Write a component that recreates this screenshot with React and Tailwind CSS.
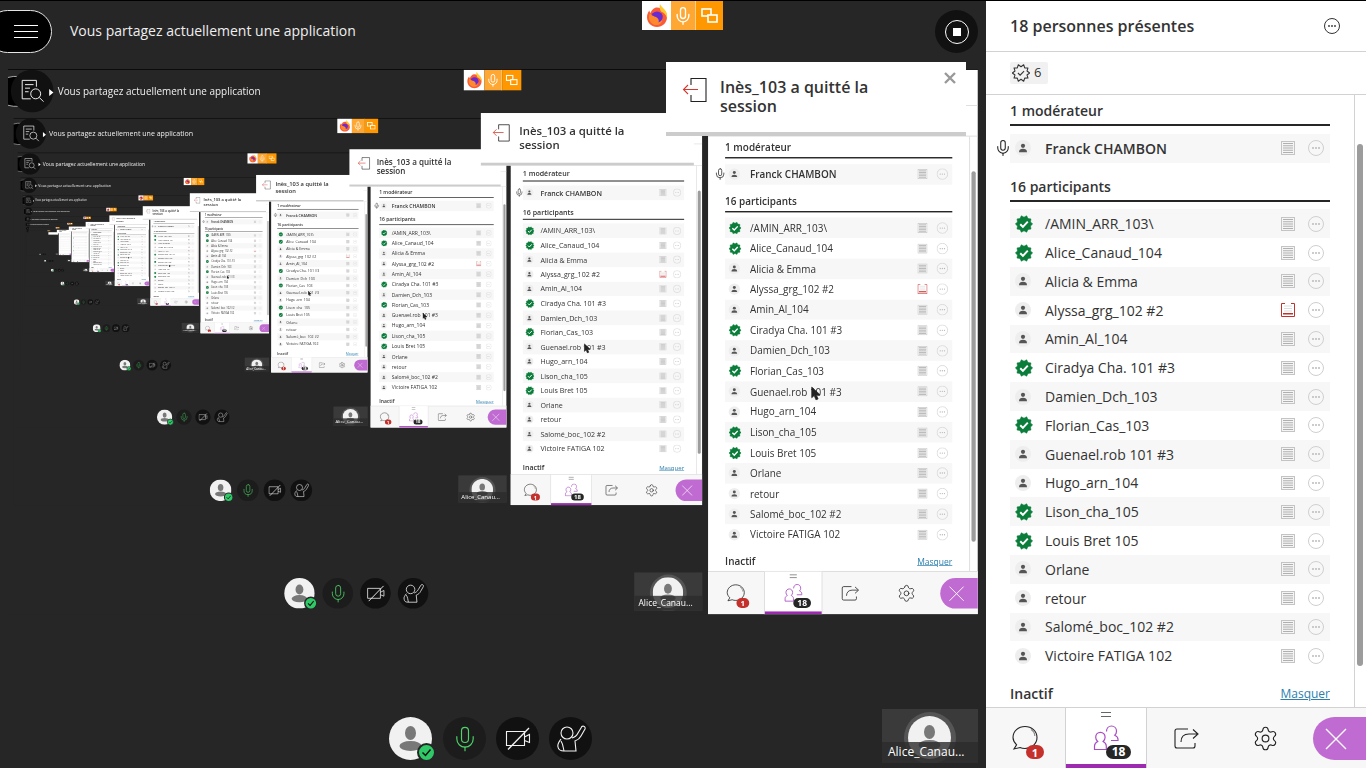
import { Mic, Settings } from 'lucide-react';

const MAX_DEPTH = 10;

const participants = [
  { name: '/AMIN_ARR_103\\', ok: true },
  { name: 'Alice_Canaud_104', ok: true },
  { name: 'Alicia & Emma' },
  { name: 'Alyssa_grg_102 #2', book: true },
  { name: 'Amin_Al_104' },
  { name: 'Ciradya Cha. 101 #3', ok: true },
  { name: 'Damien_Dch_103' },
  { name: 'Florian_Cas_103', ok: true },
  { name: 'Guenael.rob 101 #3' },
  { name: 'Hugo_arn_104' },
  { name: 'Lison_cha_105', ok: true },
  { name: 'Louis Bret 105', ok: true },
  { name: 'Orlane' },
  { name: 'retour' },
  { name: 'Salomé_boc_102 #2' },
  { name: 'Victoire FATIGA 102' },
];

// scalloped outline used by the "present" badges
const starPoints = (n, outer, inner) => {
  const pts = [];
  for (let i = 0; i < n * 2; i++) {
    const r = i % 2 === 0 ? outer : inner;
    const a = (i / (n * 2)) * Math.PI * 2;
    pts.push(`${(10 + r * Math.cos(a)).toFixed(2)},${(10 + r * Math.sin(a)).toFixed(2)}`);
  }
  return pts.join(' ');
};
const scallop = starPoints(10, 9.6, 7.6);
const gear = starPoints(10, 9.6, 7);

function OkBadge() {
  return (
    <svg width="18" height="18" viewBox="0 0 20 20">
      <polygon points={scallop} fill="#0b7d3a" stroke="#0b7d3a" strokeWidth="0.6" strokeLinejoin="round" />
      <path d="M5.800 10.200l3 3 5.400-5.800" fill="none" stroke="#fff" strokeWidth="2.200" />
    </svg>
  );
}

function PersonDot() {
  return (
    <div className="flex h-4 w-4 items-center justify-center rounded-full bg-[#eeeeee]">
      <svg width="10" height="10" viewBox="0 0 10 10" fill="#555">
        <circle cx="5" cy="2.800" r="2.100" />
        <path d="M1 9.200c0-2.400 1.600-3.400 4-3.400s4 1 4 3.400z" />
      </svg>
    </div>
  );
}

function ListIcon({ book }) {
  if (book) {
    return (
      <svg width="14" height="14" viewBox="0 0 14 14" fill="none">
        <path d="M4 0.500H0.500v13h13v-13H10" stroke="#c4302b" />
        <path d="M3 3h8M3 5.500h8M3 8h8" stroke="#dddddd" />
        <rect x="2" y="10" width="10" height="1.500" fill="#c4302b" />
      </svg>
    );
  }
  return (
    <svg width="14" height="14" viewBox="0 0 14 14">
      <rect x="0.500" y="0.500" width="13" height="13" fill="#f5f5f5" stroke="#c4c4c4" />
      <path d="M2 2.500h10M2 4.750h10M2 7h10M2 9.250h10M2 11.500h10" stroke="#b0b0b0" strokeWidth="1.200" />
    </svg>
  );
}

function MoreIcon({ dark }) {
  const c = dark ? '#333' : '#cfcfcf';
  const d = dark ? '#333' : '#b5b5b5';
  return (
    <svg width="16" height="16" viewBox="0 0 16 16">
      <circle cx="8" cy="8" r="7.500" fill="none" stroke={c} />
      <circle cx="5" cy="8" r="0.900" fill={d} />
      <circle cx="8" cy="8" r="0.900" fill={d} />
      <circle cx="11" cy="8" r="0.900" fill={d} />
    </svg>
  );
}

function Row({ p, shaded, mic }) {
  return (
    <div className={`relative flex h-[28.8px] items-center pl-[5px] pr-[6px] ${shaded ? 'bg-[#f7f7f7]' : ''}`}>
      {mic && <Mic size={18} strokeWidth={1.4} className="absolute left-[-16px] text-[#222]" />}
      <div className="flex w-[30px] shrink-0 items-center">{p.ok ? <OkBadge /> : <PersonDot />}</div>
      <span className={`flex-1 text-[14px] text-[#333] ${mic ? 'font-semibold' : ''}`}>{p.name}</span>
      <ListIcon book={p.book} />
      <div className="ml-[13px]"><MoreIcon /></div>
    </div>
  );
}

function Sidebar() {
  return (
    <div className="flex h-[767px] w-[380px] shrink-0 flex-col bg-white font-['Open_Sans',sans-serif]">
      <div className="flex h-[51px] shrink-0 items-center justify-between border-b border-[#d2d2d2] pl-6 pr-[26px]">
        <span className="text-[16px] font-semibold text-[#333]">18 personnes présentes</span>
        <MoreIcon dark />
      </div>
      <div className="flex h-[43px] shrink-0 items-center border-b border-[#d2d2d2] pl-6">
        <div className="flex h-[22px] w-[38px] items-center gap-[4px] rounded-[2px] bg-[#f1f1f1] pl-[2px] text-[13px] text-[#333]">
          <svg width="18" height="18" viewBox="0 0 20 20">
            <polygon points={gear} fill="none" stroke="#333" strokeWidth="1.200" strokeLinejoin="round" />
            <path d="M6.600 10l2.400 2.400 4.400-4.600" fill="none" stroke="#333" strokeWidth="1.200" />
          </svg>
          6
        </div>
      </div>
      <div className="flex min-h-0 flex-1">
        <div className="w-[368px] overflow-hidden pl-6 pr-6">
          <div className="flex h-[31px] items-end border-b-2 border-[#262626] pb-[4px] text-[14px] font-semibold leading-[19px] text-[#333]">1 modérateur</div>
          <div className="mt-2">
            <Row p={{ name: 'Franck CHAMBON' }} shaded mic />
          </div>
          <div className="flex h-[39px] items-end border-b-2 border-[#262626] pb-[4px] text-[14px] font-semibold leading-[19px] text-[#333]">16 participants</div>
          <div className="mt-[7.6px]">
            {participants.map((p, i) => (
              <Row key={p.name} p={p} shaded={i % 2 === 0} />
            ))}
          </div>
          <div className="mt-[13px] flex items-center justify-between">
            <span className="text-[14px] font-semibold text-[#333]">Inactif</span>
            <span className="text-[12px] text-[#2b7fad] underline">Masquer</span>
          </div>
        </div>
        <div className="w-[12px] border-l border-[#d2d2d2] pl-[2px] pt-[49px]">
          <div className="h-[522px] w-[6px] rounded-[3px] bg-[#9c9c9c]" />
        </div>
      </div>
      <TabBar />
    </div>
  );
}

function TabBar() {
  return (
    <div className="flex h-[61px] shrink-0 border-t border-[#d2d2d2] bg-[#f7f7f7]">
      <div className="relative flex w-[79px] items-center justify-center pr-[2px]">
        <svg width="28" height="28" viewBox="0 0 28 28" fill="none" stroke="#222" strokeWidth="1.100">
          <path d="M14 2.500c6.600 0 12 4.800 12 11s-5.400 11-12 11c-1.800 0-3.500-.3-5-1l-6 1.500 2.600-4.200C3.400 18.600 2 16 2 13.500c0-6.200 5.400-11 12-11z" />
          <path d="M20 5.500c2.400 1.400 3.800 3.800 3.800 6.500" stroke="#888" />
        </svg>
        <div className="absolute left-[40px] top-[37px] flex h-[14px] w-[18px] items-center justify-center rounded-full bg-[#c4302b] text-[11px] font-bold leading-none text-white">1</div>
      </div>
      <div className="relative flex w-[82px] flex-col items-center border-x border-[#d2d2d2] bg-white">
        <div className="mt-[4px] h-[5px] w-[10px] border-y border-[#666]" />
        <svg className="absolute left-[27px] top-[17px]" width="27" height="26" viewBox="0 0 27 26" fill="none" stroke="#a94cc4" strokeWidth="1.200">
          <path d="M1.500 24.500v-3.500c0-2.400 1.500-3.600 3.200-4.500-1.300-1.100-2-2.500-2-4.200 0-2.900 2-5 4.700-5s4.700 2.100 4.700 5c0 1.700-.7 3.100-2 4.200 1.700.9 3.200 2.100 3.200 4.500v3.500z" />
          <path d="M13.500 6.500C13.500 3.500 15.500 1 18.500 1s5 2.400 5 5.200c0 1.700-.7 3-1.700 4 1.700.8 3.200 1.800 3.200 4v1.300h-7" />
        </svg>
        <div className="absolute left-[40px] top-[37px] flex h-[14px] w-[25px] items-center justify-center rounded-full bg-[#262626] text-[12px] font-bold leading-none text-white">18</div>
        <div className="absolute bottom-0 left-0 right-0 h-[4px] bg-[#9c2bb0]" />
      </div>
      <div className="flex w-[78px] items-center justify-center">
        <svg width="26" height="24" viewBox="0 0 26 24" fill="none" stroke="#222" strokeWidth="1.100">
          <path d="M15 3H4a2 2 0 0 0-2 2v15a2 2 0 0 0 2 2h16a2 2 0 0 0 2-2v-3" />
          <path d="M8 16c0-5 3-8 8-8h8M20 3.500L25 8l-5 4.500" />
        </svg>
      </div>
      <div className="flex w-[80px] items-center justify-center">
        <Settings size={27} strokeWidth={1} className="text-[#222]" />
      </div>
      <div className="ml-[8px] mt-[9px] flex h-[43px] w-[53px] items-center justify-center rounded-l-full bg-[#c06bd1] pl-[1px] pr-[9px]">
        <svg width="22" height="22" viewBox="0 0 22 22" stroke="#fff" strokeWidth="1.300">
          <path d="M1 1l20 20M21 1L1 21" />
        </svg>
      </div>
    </div>
  );
}

function BigPerson() {
  return (
    <svg width="43" height="43" viewBox="0 0 43 43">
      <circle cx="21.500" cy="21.500" r="21.500" fill="#f1f1f1" />
      <ellipse cx="21.500" cy="16" rx="5.500" ry="7" fill="#787878" />
      <ellipse cx="21.500" cy="29" rx="11" ry="5" fill="#787878" />
    </svg>
  );
}

function Controls() {
  return (
    <div className="flex items-center gap-[11px] pb-[8px] pl-[389px]">
      <div className="relative h-[43px] w-[43px]">
        <BigPerson />
        <div className="absolute left-[28px] top-[26px] flex h-[19px] w-[19px] items-center justify-center rounded-full border-2 border-[#262626] bg-[#2fc968]">
          <svg width="11" height="11" viewBox="0 0 11 11" fill="none" stroke="#111" strokeWidth="1.500">
            <path d="M1.500 5.500l3 3 5-6" />
          </svg>
        </div>
      </div>
      <div className="flex h-[43px] w-[43px] items-center justify-center rounded-full bg-[#1c1c1c]">
        <Mic size={28} strokeWidth={1} className="text-[#4fd268]" />
      </div>
      <div className="-ml-[1px] flex h-[43px] w-[43px] items-center justify-center rounded-full bg-[#111]">
        <svg width="26" height="24" viewBox="0 0 26 24" fill="none" stroke="#f2f2f2" strokeWidth="1.100">
          <path d="M1.500 4.500h18v14h-18zM19.500 10l5-2.500v8l-5-2" />
          <path d="M3 22.500L24 1" strokeWidth="1.300" />
        </svg>
      </div>
      <div className="-ml-[1px] flex h-[43px] w-[43px] items-center justify-center rounded-full bg-[#111]">
        <svg width="43" height="43" viewBox="0 0 43 43" fill="none" stroke="#f2f2f2" strokeWidth="1.100">
          <circle cx="18" cy="16" r="6" />
          <path d="M12 22c-2 3-4 5-3 8 .5 3 2 4 6 4h12l-1-10c3-1 5-3 6-5l4-7c1-3-3-4-4-1l-3 5c-1.500 3-4 4.500-6 5" />
          <path d="M12 24c2 3 2 6 3 10" />
        </svg>
      </div>
    </div>
  );
}

function MenuButton({ level }) {
  return (
    <div className="relative h-[43px] w-[52px]">
      <div className="absolute left-[-14px] top-0 flex h-[43px] w-[66px] items-center justify-center rounded-[21.500px] border border-[#e5e5e5] bg-black pl-[14px]">
        {level === 0 && (
          <div className="flex h-[13px] w-[24px] flex-col justify-between">
            <div className="h-px bg-white" />
            <div className="h-px bg-white" />
            <div className="h-px bg-white" />
          </div>
        )}
      </div>
      {level > 0 && (
        <>
          <div className="absolute left-[4px] top-[-9px] flex h-[60px] w-[60px] items-center justify-center rounded-full bg-[#111]">
            <svg width="36" height="36" viewBox="0 0 36 36" fill="none" stroke="#fff" strokeWidth="1.300">
              <path d="M24 12V3H4v26h12M8 9h12M8 14h7M8 19h5" />
              <circle cx="23" cy="22" r="7" />
              <path d="M28 27l6 6" />
            </svg>
          </div>
          <div className="absolute left-[58px] top-[18px] h-0 w-0 border-y-[5px] border-l-[6px] border-y-transparent border-l-white" />
        </>
      )}
    </div>
  );
}

function ShareBadge() {
  return (
    <div className="absolute left-[642px] top-0 flex h-[29px] w-[81px]">
      <div className="flex w-[29px] items-center justify-center bg-white">
        <svg width="22" height="24" viewBox="0 0 22 24">
          <path d="M11 3.500c5.500 0 10 4.300 10 9.700s-4.500 9.800-10 9.800S1 18.600 1 13.200c0-2.800 1-5 2.500-6.700 0 1.200.4 2 1 2.500C5.500 6 8 3.500 11 3.500z" fill="#fb5a37" />
          <path d="M14 0c1 3 5 5 6.500 8.500 1 2.500.5 5.500.5 5.500-1-3-3-5.500-6-6.500C14 6 13 3 14 0z" fill="#ffc82e" />
          <circle cx="11" cy="13.500" r="6" fill="#6a2bcf" />
          <path d="M4 9c1.500 3 4 3 6 4 2 .9 3.500 3 2.500 5.500 3-1 4.500-3.500 4-6.500 1 4-1 8.500-5.500 9C7 21.500 3.500 18 3 14c-.2-2 .3-3.500 1-5z" fill="#ff8a2e" />
        </svg>
      </div>
      <div className="flex w-[25px] items-center justify-center border-r border-[#ffd08a] bg-[#ffa733]">
        <Mic size={20} strokeWidth={1.6} className="text-white" />
      </div>
      <div className="flex flex-1 items-center justify-center bg-[#ff9800]">
        <svg width="17" height="15" viewBox="0 0 17 15" fill="none" stroke="#fff" strokeWidth="1.600">
          <rect x="1" y="1" width="9" height="7" />
          <rect x="7" y="7" width="9" height="7" fill="#ff9800" />
        </svg>
      </div>
    </div>
  );
}

function Toast() {
  return (
    <div className="absolute left-[666px] top-[61px] flex h-[74px] w-[300px] border-b-[4px] border-[#cccccc] bg-white pl-[16px] pt-[16px] font-['Open_Sans',sans-serif]">
      <svg className="mt-[-1px] shrink-0" width="26" height="26" viewBox="0 0 26 26" fill="none">
        <path d="M9 8V1.500h15v23H9V18" stroke="#222" strokeWidth="1.100" />
        <path d="M16 12.500H1.500M6 8l-4.500 4.500L6 17" stroke="#d03a30" strokeWidth="1.100" />
      </svg>
      <div className="ml-[12px] w-[190px] text-[16px] font-semibold leading-[19px] text-[#333]">Inès_103 a quitté la session</div>
      <svg className="absolute right-[10px] top-[10px]" width="12" height="12" viewBox="0 0 12 12" stroke="#999" strokeWidth="2.400">
        <path d="M1 1l10 10M11 1L1 11" />
      </svg>
    </div>
  );
}

function Thumb() {
  return (
    <div className="absolute left-[882px] top-[708px] h-[54px] w-[96px] overflow-hidden bg-[#3a3a3a] font-['Open_Sans',sans-serif]">
      <div className="absolute left-[22px] top-[3px] h-[52px] w-[52px] rounded-full bg-[#555] p-[4px]">
        <BigPerson />
      </div>
      <div className="absolute bottom-0 left-0 right-0 h-[21px] bg-[#2c2c2c]/80 pl-[6px] text-[12px] leading-[20px] text-white">Alice_Canau...</div>
    </div>
  );
}

function Cursor() {
  return (
    <svg className="absolute left-[1131px] top-[446px]" width="13" height="20" viewBox="0 0 13 20">
      <path d="M1 1v15l3.500-3 2.500 6 3-1.300-2.500-5.700H13z" fill="#222" stroke="#222" />
    </svg>
  );
}

function Screen({ level }) {
  return (
    <div className="relative flex h-[768px] w-[1366px] overflow-hidden border-t border-black bg-[#262626] font-['Open_Sans',sans-serif]">
      <div className="flex w-[986px] shrink-0 flex-col">
        <div className="flex h-[68px] shrink-0 items-start pt-[9px]">
          <MenuButton level={level} />
          <span className="ml-[18px] mt-[11px] text-[14px] leading-[20px] text-[#eeeeee]">Vous partagez actuellement une application</span>
          <div className="ml-auto mr-[8px] flex h-[43px] w-[43px] items-center justify-center rounded-full bg-[#111]">
            <div className="flex h-[24px] w-[24px] items-center justify-center rounded-full border border-white">
              <div className="h-[8px] w-[8px] bg-white" />
            </div>
          </div>
        </div>
        <div className="relative min-h-0 flex-1">
          {level < MAX_DEPTH && (
            <div className="absolute left-[8px] top-0 origin-top-left scale-[0.71] blur-[0.4px]">
              <Screen level={level + 1} />
            </div>
          )}
        </div>
        <Controls />
      </div>
      <Sidebar />
      <ShareBadge />
      <Toast />
      <Thumb />
      {level > 0 && <Cursor />}
    </div>
  );
}

export default function App() {
  return <Screen level={0} />;
}
